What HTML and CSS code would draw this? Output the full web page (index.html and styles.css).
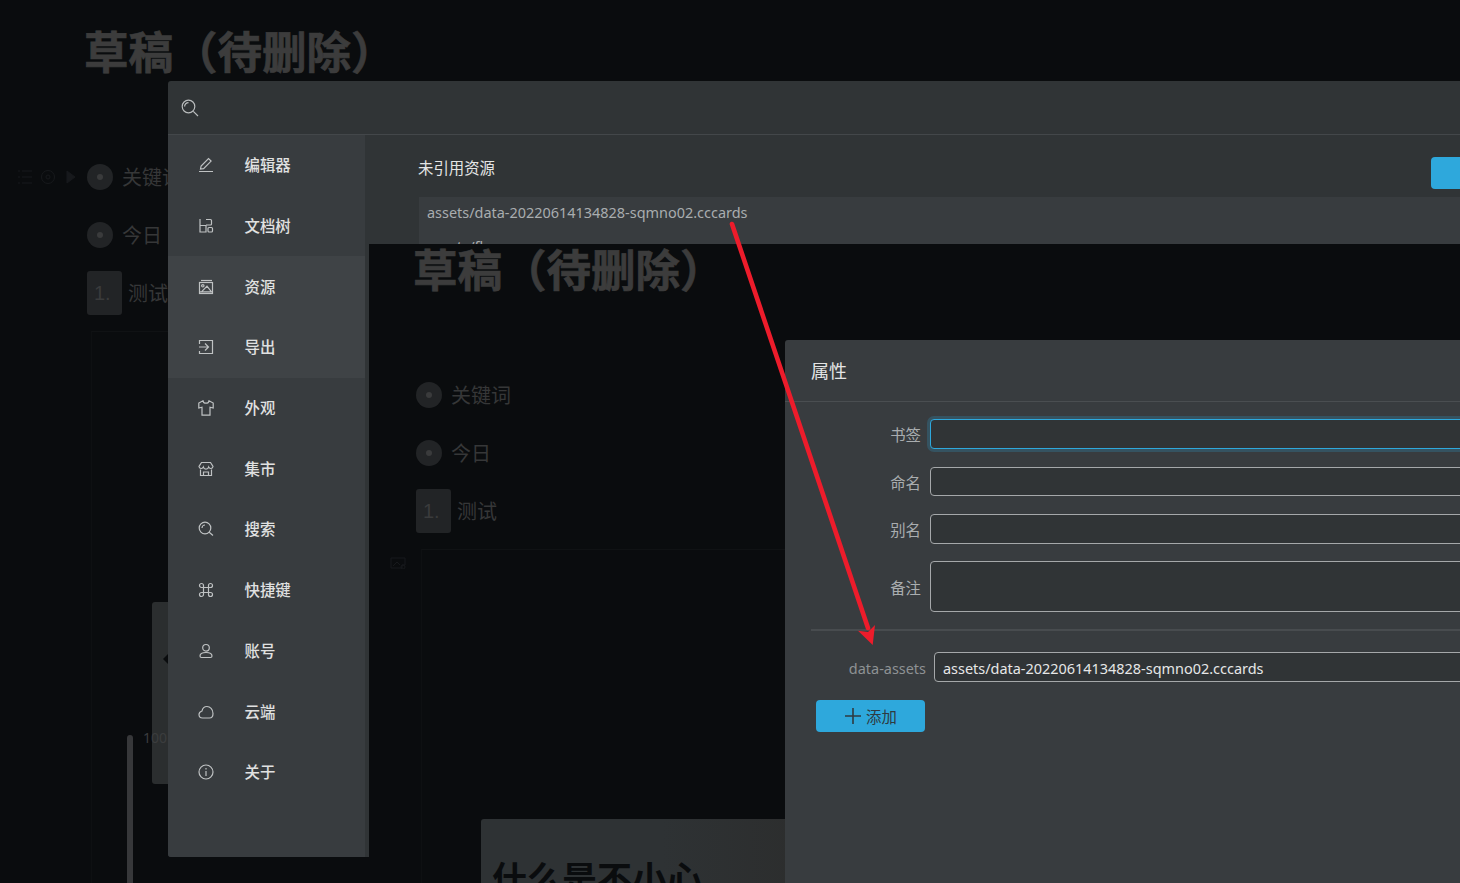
FILE: index.html
```html
<!DOCTYPE html>
<html lang="zh">
<head>
<meta charset="utf-8">
<title>属性</title>
<link rel="stylesheet" href="styles.css">
</head>
<body>
<div class="desk">
  <section class="doc doc-back">
    <h1 class="doc-title">草稿（待删除）</h1>
    <div class="doc-item first"><span class="bullet"></span><span class="doc-text">关键词</span></div>
    <div class="doc-item second"><span class="bullet"></span><span class="doc-text">今日</span></div>
    <div class="doc-item third"><span class="num">1.</span><span class="doc-text">测试</span></div>
    <div class="doc-card"></div>
  </section>

  <svg class="faint-tools" viewBox="0 0 60 16" width="60" height="16" fill="none" stroke="currentColor">
    <path d="M1 2h2M1 8h2M1 14h2M5 2h10M5 8h10M5 14h10"/>
    <circle cx="31" cy="8" r="6.5"/><circle cx="31" cy="8" r="2"/>
    <path d="M50 2l8 6-8 6z" fill="currentColor"/>
  </svg>

  <div class="back-card"><span class="back-mark"></span></div>
  <div class="back-track"></div>
  <span class="back-count">100</span>

  <section class="settings">
    <header class="settings-search">
      <svg class="search-icon" viewBox="0 0 18 18" width="18" height="18" fill="none" stroke="currentColor" stroke-width="1.2">
        <circle cx="7.5" cy="7.5" r="6.3"/><path d="M12.3 12.3L17 17M3.6 7.5a3.9 3.9 0 0 1 3.9-3.9"/>
      </svg>
    </header>
    <div class="settings-body">
      <nav class="nav">
        <a class="nav-row"><svg class="nav-icon" viewBox="0 0 16 16"><path d="M2.500 12l.6-3L10.500 1.500l2.600 2.600L5.600 11.600zM1 14.500h14"/></svg><span>编辑器</span></a>
        <a class="nav-row"><svg class="nav-icon" viewBox="0 0 16 16"><path d="M2 1v13h6V7.500H2"/><path d="M8 1.500h4.500a1 1 0 0 1 1 1V6a1 1 0 0 1-1 1H8"/><rect x="10" y="9.500" width="4.500" height="4.500" rx="1"/></svg><span>文档树</span></a>
        <a class="nav-row active"><svg class="nav-icon" viewBox="0 0 16 16"><path d="M3 1.500h11"/><rect x="1.500" y="3.500" width="13" height="11"/><circle cx="4.800" cy="6.800" r="1.200"/><path d="M3.500 12.800h10L9 7.200zM1.500 12.800h12"/></svg><span>资源</span></a>
        <a class="nav-row active"><svg class="nav-icon" viewBox="0 0 16 16"><path d="M1.500 5V1.500h13v13h-13V12M1 8h9M7 4.500L10.500 8 7 11.500"/></svg><span>导出</span></a>
        <a class="nav-row"><svg class="nav-icon" viewBox="0 0 16 16"><path d="M5 .8L.8 3v5L4 7.200v8h8V7.200l3.200.8V3L11 .8C10.500 4 5.500 4 5 .8z"/></svg><span>外观</span></a>
        <a class="nav-row"><svg class="nav-icon" viewBox="0 0 16 16"><path d="M3.500 1.500h9l2.500 4a2.300 2.300 0 0 1-4.400.6 2.700 2.700 0 0 1-5.200 0A2.300 2.300 0 0 1 1 5.500zM2.500 8.500v6h11v-6M5.500 14.500V11h5v3.500"/></svg><span>集市</span></a>
        <a class="nav-row"><svg class="nav-icon" viewBox="0 0 16 16"><circle cx="7" cy="7" r="5.800"/><path d="M11.200 11.200l3.800 3.300M4 7a3 3 0 0 1 3-3"/></svg><span>搜索</span></a>
        <a class="nav-row"><svg class="nav-icon" viewBox="0 0 16 16"><path d="M5.500 5.500V3.500a2 2 0 1 0-2 2h9a2 2 0 1 0-2-2v9a2 2 0 1 0 2-2h-9a2 2 0 1 0 2 2z"/></svg><span>快捷键</span></a>
        <a class="nav-row"><svg class="nav-icon" viewBox="0 0 16 16"><circle cx="8" cy="4.800" r="3.300"/><path d="M2 13c0-2.500 3-3.500 6-3.500s6 1 6 3.500c0 1-.8 1.500-1.500 1.500h-9C2.800 14.500 2 14 2 13z"/></svg><span>账号</span></a>
        <a class="nav-row"><svg class="nav-icon" viewBox="0 0 16 16"><path d="M4.500 14h7c2 0 3.500-1.500 3.500-4.500 0-4.500-3-7-6-7-3 0-4.500 2-5 4.500-1.500.5-3 2-3 3.500 0 2 1.500 3.500 3.500 3.500z"/></svg><span>云端</span></a>
        <a class="nav-row"><svg class="nav-icon" viewBox="0 0 16 16"><circle cx="8" cy="8" r="7"/><path d="M8 7v5M8 4v1.400"/></svg><span>关于</span></a>
      </nav>
      <div class="assets">
        <div class="assets-head">
          <h2 class="assets-title">未引用资源</h2>
          <button class="blue-btn wide"></button>
        </div>
        <ul class="assets-list">
          <li>assets/data-20220614134828-sqmno02.cccards</li>
          <li>assets/flow</li>
        </ul>
      </div>
    </div>
  </section>

  <section class="front">
    <div class="doc doc-front">
      <h1 class="doc-title">草稿（待删除）</h1>
      <div class="doc-item first"><span class="bullet"></span><span class="doc-text">关键词</span></div>
      <div class="doc-item second"><span class="bullet"></span><span class="doc-text">今日</span></div>
      <div class="doc-item third"><span class="num">1.</span><span class="doc-text">测试</span></div>
      <div class="doc-card"></div>
    </div>
    <svg class="faint-image" viewBox="0 0 16 12" width="16" height="12" fill="none" stroke="currentColor"><path d="M1 1h14v7h-3v3H1zM3 9l4-4 3 3"/><circle cx="13" cy="10" r="2"/></svg>
    <div class="quote-card"><h2 class="quote-title">什么是不小心</h2></div>

    <div class="attrs">
      <h3 class="attrs-title">属性</h3>
      <div class="attrs-form">
        <div class="attr-row r1"><label class="attr-label">书签</label><div class="attr-input focus"></div></div>
        <div class="attr-row r2"><label class="attr-label">命名</label><div class="attr-input"></div></div>
        <div class="attr-row r3"><label class="attr-label">别名</label><div class="attr-input"></div></div>
        <div class="attr-row r4"><label class="attr-label">备注</label><div class="attr-input"></div></div>
      </div>
      <div class="attrs-divider"></div>
      <div class="custom-row">
        <label class="custom-label">data-assets</label>
        <div class="attr-input value">assets/data-20220614134828-sqmno02.cccards</div>
      </div>
      <button class="blue-btn add">
        <svg viewBox="0 0 18 18" width="18" height="18" fill="none" stroke="currentColor" stroke-width="1.6"><path d="M9 1v16M1 9h16"/></svg>
        <span>添加</span>
      </button>
    </div>
  </section>

  <svg class="arrow" viewBox="0 0 1460 883" width="1460" height="883">
    <path class="arrow-line" d="M732 224L868 628"/>
    <path class="arrow-head" d="M872.700 645L858 630.700 868 632 875 625z"/>
  </svg>
</div>
</body>
</html>
```

FILE: styles.css
```css
* { box-sizing: border-box; }
html, body { margin: 0; padding: 0; background: #0a0c0e; overflow: hidden; }
body { font-family: "Noto Sans", "Noto Sans CJK SC", sans-serif; }
.desk { position: relative; width: 1460px; height: 883px; overflow: hidden; background: #0a0c0e; }

/* dimmed documents behind the windows */
.doc { color: #343536; }
.doc-back { position: absolute; left: 85px; top: 28px; width: 700px; height: 855px; }
.doc-front { padding: 2px 0 0 46px; height: 100%; }
.doc-title {
  margin: -2px 0 90px -2px;
  font: 700 44.5px/48px "Noto Sans CJK SC", sans-serif;
  color: #3c3c3c;
  -webkit-text-stroke: .7px #3c3c3c;
  white-space: nowrap;
}
.doc-back .doc-title { margin-left: -1px; }
.doc-item { display: flex; align-items: center; margin-left: 2px; }
.doc-front .doc-item { margin-left: 1px; }
.doc-item.first, .doc-item.second { height: 26px; }
.doc-item.second { margin-top: 32px; }
.doc-item.third { margin-top: 23px; height: 44px; }
.bullet { position: relative; width: 26px; height: 26px; border-radius: 50%; background: #222426; margin-right: 9px; display: flex; align-items: center; justify-content: center; }
.bullet::after { content: ""; width: 6px; height: 6px; border-radius: 50%; background: #3a3b3c; }
.doc-text { font: 400 20px/26px "Noto Sans CJK SC", sans-serif; color: #363738; }
.num { width: 35px; height: 44px; border-radius: 3px; background: #222426; margin-right: 6px; padding-left: 7px; font: 400 20px/44px "Liberation Sans", sans-serif; color: #3a3b3c; }
.doc-card { margin: 16px 0 0 6px; height: 600px; border-top: 1px solid #101214; border-left: 1px solid #0e1012; }

.faint-tools { position: absolute; left: 17px; top: 169px; color: #17191c; }
.back-card { position: absolute; left: 152px; top: 602px; width: 40px; height: 182px; border-radius: 3px; background: #2b2e2f; }
.back-mark { position: absolute; left: 11px; top: 51px; width: 0; height: 0; border: 6px solid transparent; border-right-color: #0a0c0e; border-left-width: 0; }
.back-track { position: absolute; left: 127px; top: 735px; width: 6px; height: 148px; border-radius: 3px 3px 0 0; background: #37383a; }
.back-count { position: absolute; left: 143px; top: 728px; font: 400 14px/20px "Noto Sans", sans-serif; color: #3b3d3e; }

/* settings window */
.settings { position: absolute; left: 168px; top: 81px; width: 1400px; height: 776px; border-radius: 3px; overflow: hidden; background: #303436; }
.settings-search { height: 54px; display: flex; align-items: center; padding: 0 0 0 13px; border-bottom: 1px solid #43474a; color: #b8bbbc; }
.search-icon { display: block; margin-top: 1px; }
.settings-body { display: flex; height: 722px; }
.nav { width: 197px; flex: none; background: #383c3f; }
.nav-row { display: flex; align-items: center; height: 60.7px; padding-left: 30px; gap: 30.5px; font: 500 15.4px/22px "Noto Sans CJK SC", sans-serif; color: #e0e1e1; }
.nav-row span { margin-top: -2px; }
.nav-row.active { background: #3f4346; }
.nav-icon { width: 16px; height: 16px; flex: none; fill: none; stroke: #bfc2c3; stroke-width: 1.2; }
.assets { flex: 1; padding: 22px 37px 0 53px; }
.assets-head { display: flex; justify-content: space-between; align-items: flex-start; height: 32px; }
.assets-title { margin: -1px 0 0; font: 400 15.4px/22px "Noto Sans CJK SC", sans-serif; color: #e4e5e5; }
.assets-list { list-style: none; margin: 8px 0 0 1px; padding: 0 0 0 8px; background: #383c3f; font: 400 14.45px/32px "Noto Sans", sans-serif; color: #a9adaf; }
.assets-list li + li { margin-top: 2px; }
.blue-btn { display: flex; align-items: center; justify-content: center; border: 0; border-radius: 4px; background: #2ea8dc; color: #2f3a40; padding: 0; }
.wide { width: 100px; height: 32px; }

/* foreground capture */
.front { position: absolute; left: 369px; top: 244px; width: 1091px; height: 639px; background: #0a0c0e; overflow: hidden; }
.faint-image { position: absolute; left: 21px; top: 313px; color: #17191c; }
.quote-card { position: absolute; left: 112px; top: 575px; width: 330px; height: 100px; border-radius: 3px; padding: 36px 0 0 11px; background: linear-gradient(90deg, #2e3234 0%, #2e3234 55%, #2c2d2d 100%); }
.quote-title { margin: 0; font: 700 35px/44px "Noto Sans CJK SC", sans-serif; color: #0a0c0e; white-space: nowrap; }

.attrs { position: absolute; left: 416px; top: 96px; width: 800px; height: 600px; border-radius: 3px; background: #383c3f; }
.attrs-title { margin: 0; height: 62px; padding-left: 26px; border-bottom: 1px solid #4a4e51; font: 400 18px/61px "Noto Sans CJK SC", sans-serif; color: #e4e5e5; }
.attrs-form { padding-top: 17px; }
.attr-row { display: flex; align-items: center; gap: 9px; }
.r1 { height: 30px; margin-bottom: 18px; }
.r2 { height: 29px; margin-bottom: 18px; }
.r3 { height: 30px; margin-bottom: 17px; }
.r4 { height: 51px; margin-bottom: 17px; }
.attr-label { width: 136px; text-align: right; font: 400 15.4px/22px "Noto Sans CJK SC", sans-serif; color: #a9adaf; }
.attr-input { flex: 1; height: 100%; border: 1px solid #a5a8aa; border-radius: 4px; background: #303436; }
.attr-input.focus { border-color: #2ea8dc; box-shadow: 0 0 0 3px rgba(46, 168, 220, .22); }
.attrs-divider { height: 2px; margin-left: 26px; background: #484c4f; }
.custom-row { display: flex; align-items: center; height: 30px; margin-top: 21px; gap: 8px; }
.custom-label { width: 141px; text-align: right; font: 400 14.45px/20px "Noto Sans", sans-serif; color: #8e9294; padding-top: 4px; }
.attr-input.value { height: 30px; padding-left: 8px; font: 400 14.45px/31px "Noto Sans", sans-serif; color: #e6e7e7; }
.add { width: 109px; height: 32px; margin: 18px 0 0 31px; gap: 4px; font: 400 15.4px/22px "Noto Sans CJK SC", sans-serif; color: #2f3a40; }

/* annotation */
.arrow { position: absolute; left: 0; top: 0; pointer-events: none; }
.arrow-line { fill: none; stroke: #ed1c2b; stroke-width: 4.6; stroke-linecap: round; }
.arrow-head { fill: #ed1c2b; }
```
